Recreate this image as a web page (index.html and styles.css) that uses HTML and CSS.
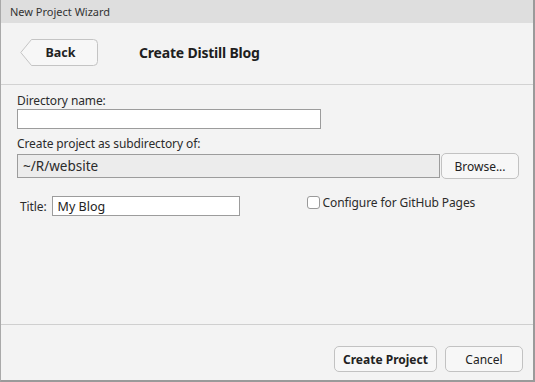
FILE: index.html
```html
<!DOCTYPE html>
<html lang="en">
<head>
    <meta charset="UTF-8">
    <title>New Project Wizard</title>
    <link rel="stylesheet" href="styles.css">
</head>
<body>
    <div class="window">
        <div class="title-bar">New Project Wizard</div>

        <div class="header">
            <button class="back-btn">
                <svg class="back-shape" width="78" height="27" viewBox="0 0 78 27">
                    <path d="M11.5 0.5 H73.5 Q77.5 0.5 77.5 4.5 V22.5 Q77.5 26.5 73.5 26.5 H11.5 L0.8 13.5 Z" fill="#f7f7f7" stroke="#c4c4c4"/>
                </svg>
                <span>Back</span>
            </button>
            <h2 class="page-title">Create Distill Blog</h2>
        </div>

        <div class="content">
            <label class="field-label">Directory name:</label>
            <input type="text" class="text-input dir-input">

            <label class="field-label sub-label">Create project as subdirectory of:</label>
            <div class="path-row">
                <div class="path-field">~/R/website</div>
                <button class="btn browse-btn">Browse...</button>
            </div>

            <div class="options-row">
                <div class="title-field">
                    <label>Title:</label>
                    <input type="text" class="text-input title-input" value="My Blog">
                </div>
                <div class="check-field">
                    <span class="check-box"></span>
                    <label>Configure for GitHub Pages</label>
                </div>
            </div>
        </div>

        <div class="footer">
            <button class="btn create-btn">Create Project</button>
            <button class="btn cancel-btn">Cancel</button>
        </div>
    </div>
</body>
</html>
```

FILE: styles.css
```css
* {
    box-sizing: border-box;
}
html, body {
    margin: 0;
    padding: 0;
}
body {
    width: 535px;
    height: 382px;
    font-family: "Noto Sans", "Open Sans", sans-serif;
    font-size: 12px;
    letter-spacing: -0.1px;
    color: #2b2b2b;
    background: #f3f3f3;
}
.window {
    width: 535px;
    height: 382px;
    display: flex;
    flex-direction: column;
    border-left: 1px solid #a9a9a9;
    border-right: 2px solid #9a9a9a;
    border-bottom: 2px solid #9a9a9a;
    background: #f3f3f3;
}
.title-bar {
    height: 23px;
    background: #dedede;
    padding-left: 9px;
    line-height: 23px;
    font-size: 11px;
    letter-spacing: 0;
    color: #333;
}
.header {
    height: 62px;
    display: flex;
    align-items: flex-start;
    padding: 16px 0 0 19px;
    border-bottom: 1px solid #d2d2d2;
}
.back-btn {
    position: relative;
    width: 78px;
    height: 27px;
    border: none;
    background: none;
    padding: 0 0 0 3px;
    font-family: inherit;
    font-size: 12.5px;
    font-weight: bold;
    color: #222;
}
.back-shape {
    position: absolute;
    left: 0;
    top: 0;
}
.back-btn span {
    position: relative;
}
.page-title {
    margin: 0 0 0 41px;
    font-size: 14px;
    line-height: 27px;
    font-weight: bold;
    letter-spacing: -0.2px;
    color: #1e1e1e;
}
.content {
    flex: 1;
    display: flex;
    flex-direction: column;
    align-items: flex-start;
    padding: 7px 0 0 16px;
    border-bottom: 1px solid #cfcfcf;
}
.field-label {
    line-height: 17px;
    height: 17px;
}
.text-input {
    height: 20px;
    border: 1px solid #9c9c9c;
    background: #fff;
    padding: 0 5px;
    font-family: inherit;
    font-size: 12.5px;
    color: #222;
    outline: none;
}
.dir-input {
    width: 304px;
}
.sub-label {
    margin-top: 6px;
}
.path-row {
    display: flex;
    align-items: center;
    margin-top: 1px;
}
.path-field {
    width: 423px;
    height: 24px;
    border: 1px solid #9c9c9c;
    background: #ececec;
    padding-left: 5px;
    line-height: 22px;
    font-size: 13.5px;
    letter-spacing: 0;
}
.btn {
    height: 26px;
    border: 1px solid #c2c2c2;
    border-radius: 5px;
    background: #f7f7f7;
    font-family: inherit;
    font-size: 12px;
    color: #222;
    padding: 0;
}
.browse-btn {
    width: 78px;
    margin-left: 1px;
}
.options-row {
    display: flex;
    align-items: flex-start;
    margin-top: 17px;
}
.title-field {
    display: flex;
    align-items: center;
    padding-left: 3px;
}
.title-field label {
    margin-right: 5px;
}
.title-input {
    width: 188px;
}
.check-field {
    display: flex;
    align-items: center;
    margin-left: 67px;
    margin-top: -2px;
}
.check-box {
    width: 13px;
    height: 13px;
    border: 1px solid #9a9a9a;
    border-radius: 3px;
    background: #fff;
    margin-right: 3px;
}
.footer {
    height: 55px;
    display: flex;
    justify-content: flex-end;
    align-items: flex-start;
    padding: 21px 10px 0 0;
}
.create-btn {
    width: 103px;
    font-weight: bold;
}
.cancel-btn {
    width: 78px;
    margin-left: 8px;
}
```
